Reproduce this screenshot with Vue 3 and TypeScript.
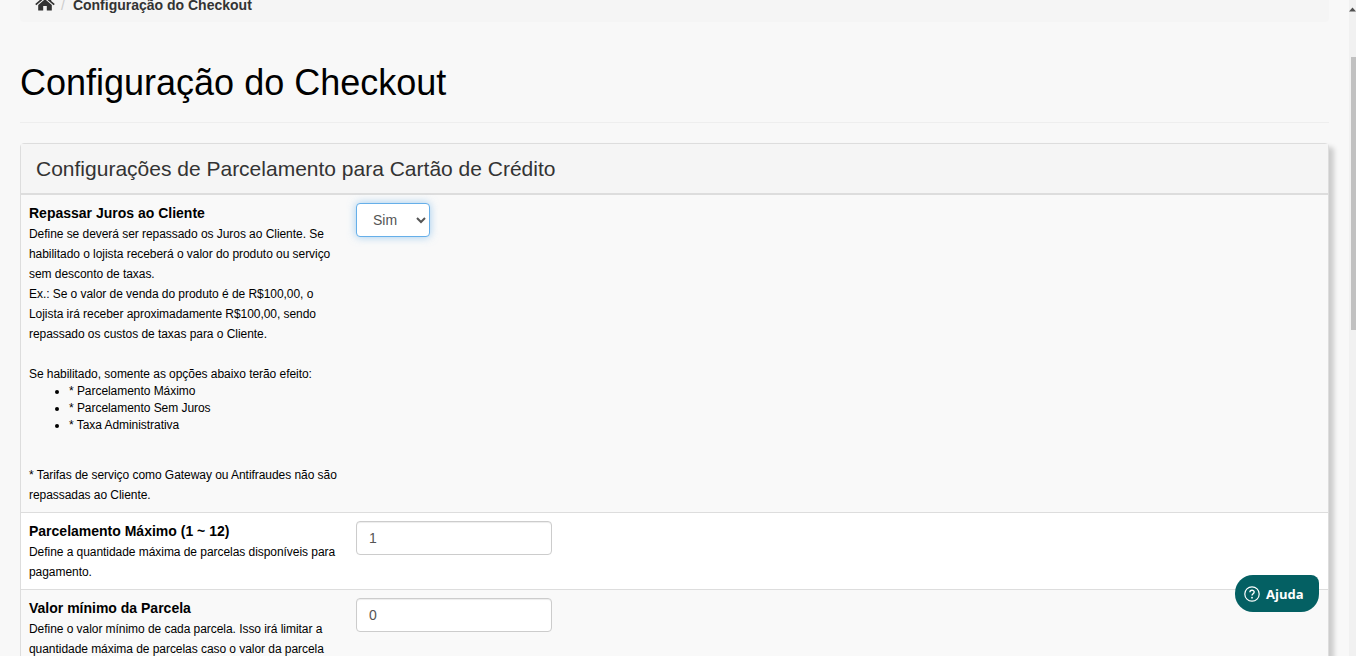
<template>
  <div class="shell">
    <main class="page">
      <nav class="crumbs">
        <svg class="home" viewBox="0 0 20 16" width="20" height="16" aria-hidden="true">
          <path d="M10 0.6 L13.6 3.7 V1.6 H16.2 V5.9 L19.8 9 L18.7 10.2 L10 2.9 L1.3 10.2 L0.2 9 Z" />
          <path d="M10 4.2 L16.8 9.9 V15.4 H11.8 V11 H8.2 V15.4 H3.2 V9.9 Z" />
        </svg>
        <span class="sep">/</span>
        <strong>Configuração do Checkout</strong>
      </nav>

      <h1>Configuração do Checkout</h1>
      <hr />

      <section class="panel">
        <h2>Configurações de Parcelamento para Cartão de Crédito</h2>

        <div class="row">
          <div class="info">
            <h3>Repassar Juros ao Cliente</h3>
            <p>
              Define se deverá ser repassado os Juros ao Cliente. Se habilitado o lojista receberá o valor do
              produto ou serviço sem desconto de taxas.<br />
              Ex.: Se o valor de venda do produto é de R$100,00, o Lojista irá receber aproximadamente R$100,00,
              sendo repassado os custos de taxas para o Cliente.<br /><br />
              Se habilitado, somente as opções abaixo terão efeito:
            </p>
            <ul>
              <li v-for="item in effects" :key="item">* {{ item }}</li>
            </ul>
            <p class="note">* Tarifas de serviço como Gateway ou Antifraudes não são repassadas ao Cliente.</p>
          </div>
          <div>
            <select v-model="repassar" class="select">
              <option>Sim</option>
              <option>Não</option>
            </select>
          </div>
        </div>

        <div v-for="field in fields" :key="field.title" class="row">
          <div class="info">
            <h3>{{ field.title }}</h3>
            <p>{{ field.text }}</p>
          </div>
          <div>
            <input class="input" type="text" :value="field.value" />
          </div>
        </div>
      </section>

      <button class="help" type="button">
        <svg viewBox="0 0 16 16" width="16" height="16" aria-hidden="true">
          <circle cx="8" cy="8" r="7.2" fill="none" stroke="#fff" stroke-width="1.2" />
          <path d="M5.9 6.2 C5.9 3.6 10.2 3.6 10.2 6.1 C10.2 7.8 8 7.8 8 9.6" fill="none" stroke="#fff" stroke-width="1.3" />
          <circle cx="8" cy="11.7" r="0.9" fill="#fff" />
        </svg>
        Ajuda
      </button>
    </main>

    <aside class="scrollbar">
      <svg viewBox="0 0 7 5" width="7" height="5" aria-hidden="true"><path d="M3.5 0.5 L7 4.5 H0 Z" /></svg>
      <div class="thumb"></div>
    </aside>
  </div>
</template>

<script setup lang="ts">
import { ref } from 'vue'

const repassar = ref('Sim')
const effects = ['Parcelamento Máximo', 'Parcelamento Sem Juros', 'Taxa Administrativa']
const fields = [
  {
    title: 'Parcelamento Máximo (1 ~ 12)',
    text: 'Define a quantidade máxima de parcelas disponíveis para pagamento.',
    value: '1',
  },
  {
    title: 'Valor mínimo da Parcela',
    text: 'Define o valor mínimo de cada parcela. Isso irá limitar a quantidade máxima de parcelas caso o valor da parcela seja inferior ao valor informado.',
    value: '0',
  },
]
</script>

<style>
html,
body {
  height: 100%;
  overflow: hidden;
}
</style>

<style scoped>
.shell {
  display: flex;
  height: 656px;
  background: #f8f8f8;
  color: #000;
  font-family: "Liberation Sans", Arial, sans-serif;
}

.page {
  position: relative;
  flex: 1;
  min-width: 0;
  padding: 0 20px;
  overflow: hidden;
}

.crumbs {
  display: flex;
  align-items: center;
  height: 37px;
  margin-top: -15px;
  padding: 2px 15px 0;
  box-sizing: border-box;
  border-radius: 4px;
  background: #f5f5f5;
  color: #333;
  font-size: 14px;
  line-height: 20px;
}

.home {
  fill: #333;
  margin-top: -4px;
}

.sep {
  margin: 0 8px 0 6px;
  color: #ccc;
}

h1 {
  margin: 41px 0 0;
  font-size: 36px;
  font-weight: 400;
  line-height: 40px;
}

hr {
  margin: 19px 0 20px;
  border: 0;
  border-top: 1px solid #eee;
}

.panel {
  border: 1px solid #ddd;
  border-radius: 4px 4px 0 0;
  box-shadow: 5px 4px 5px rgba(0, 0, 0, 0.18);
  background: #f9f9f9;
}

h2 {
  margin: 0;
  padding: 10px 15px;
  height: 51px;
  box-sizing: border-box;
  border-bottom: 2px solid #ddd;
  background: #f5f5f5;
  color: #333;
  font-size: 21px;
  font-weight: 400;
  line-height: 30px;
}

.row {
  display: grid;
  grid-template-columns: 318px 1fr;
  column-gap: 9px;
  padding: 8px 8px 7px;
  background: #f9f9f9;
}

.row + .row {
  border-top: 1px solid #ddd;
}

.row:nth-of-type(even) {
  background: #fff;
}

.info {
  font-size: 12px;
  line-height: 20px;
  letter-spacing: -0.05px;
}

h3 {
  margin: 0 0 1px;
  font-size: 14px;
  font-weight: 700;
  line-height: 20px;
  letter-spacing: 0;
}

p {
  margin: 0;
}

ul {
  margin: -1px 0 31px;
  padding-left: 40px;
  line-height: 17px;
}

.select,
.input {
  box-sizing: border-box;
  height: 34px;
  border: 1px solid #ccc;
  border-radius: 4px;
  background: #fff;
  color: #555;
  font-family: inherit;
  font-size: 14px;
}

.select {
  width: 74px;
  padding: 6px 12px;
  border-color: #66afe9;
  box-shadow: 0 0 8px rgba(102, 175, 233, 0.6);
  outline: 0;
}

.input {
  display: block;
  width: 196px;
  padding: 6px 12px;
  box-shadow: inset 0 1px 1px rgba(0, 0, 0, 0.075);
}

.help {
  position: absolute;
  left: 1235px;
  top: 575px;
  display: flex;
  align-items: center;
  gap: 6px;
  width: 84px;
  height: 37px;
  padding: 0 0 0 9px;
  border: 0;
  border-radius: 18px 8px 18px 18px;
  background: #046063;
  color: #fff;
  font-family: "Open Sans", sans-serif;
  font-size: 13px;
  font-weight: 700;
}

.scrollbar {
  flex: 0 0 7px;
  background: #f1f1f1;
  line-height: 0;
}

.scrollbar svg {
  margin-top: 7px;
  fill: #505050;
}

.thumb {
  height: 273px;
  margin: 45px 0 0 2px;
  background: #c1c1c1;
}
</style>
